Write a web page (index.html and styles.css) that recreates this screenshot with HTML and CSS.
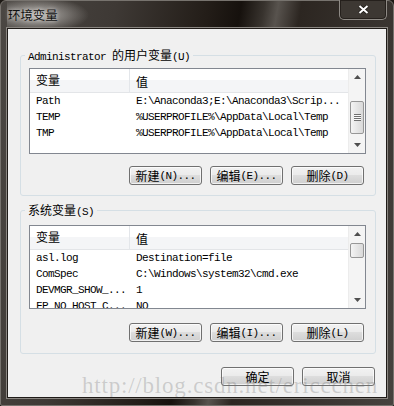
FILE: index.html
```
<!DOCTYPE html>
<html lang="zh-CN">
<head>
<meta charset="utf-8">
<title>环境变量</title>
<link rel="stylesheet" href="styles.css">
</head>
<body>
<div class="win">
  <div class="titlebar">
    <span class="title zh">环境变量</span>
    <div class="close">
      <svg width="11" height="9" viewBox="0 0 11 9"><path d="M1.5 1L9.5 8M9.5 1L1.5 8" stroke="#1a1612" stroke-width="3.4"/><path d="M1.5 1L9.5 8M9.5 1L1.5 8" stroke="#fff" stroke-width="2"/></svg>
    </div>
  </div>

  <div class="client">
    <!-- 用户变量 -->
    <fieldset class="group group-user">
      <legend><span>Administrator </span><span class="zh">的用户变量</span><span>(U)</span></legend>
      <div class="list list-user">
        <div class="grid">
          <div class="head"><span class="c1 zh">变量</span><span class="c2 zh">值</span></div>
          <div class="row"><span class="c1">Path</span><span class="c2">E:\Anaconda3;E:\Anaconda3\Scrip...</span></div>
          <div class="row"><span class="c1">TEMP</span><span class="c2">%USERPROFILE%\AppData\Local\Temp</span></div>
          <div class="row"><span class="c1">TMP</span><span class="c2">%USERPROFILE%\AppData\Local\Temp</span></div>
        </div>
        <div class="scroll">
          <div class="arrow up"><svg width="7" height="4" viewBox="0 0 7 4"><path d="M0 4L3.5 0L7 4Z" fill="#4f4f4f"/></svg></div>
          <div class="track"><div class="thumb" style="margin-top:15px;height:33px"></div></div>
          <div class="arrow"><svg width="7" height="4" viewBox="0 0 7 4"><path d="M0 0L3.5 4L7 0Z" fill="#4f4f4f"/></svg></div>
        </div>
      </div>
      <div class="btns">
        <button class="btn"><span class="zh">新建</span>(N)...</button>
        <button class="btn"><span class="zh">编辑</span>(E)...</button>
        <button class="btn"><span class="zh">删除</span>(D)</button>
      </div>
    </fieldset>

    <!-- 系统变量 -->
    <fieldset class="group group-sys">
      <legend><span class="zh">系统变量</span><span>(S)</span></legend>
      <div class="list list-sys">
        <div class="grid">
          <div class="head"><span class="c1 zh">变量</span><span class="c2 zh">值</span></div>
          <div class="row"><span class="c1">asl.log</span><span class="c2">Destination=file</span></div>
          <div class="row"><span class="c1">ComSpec</span><span class="c2">C:\Windows\system32\cmd.exe</span></div>
          <div class="row"><span class="c1">DEVMGR_SHOW_...</span><span class="c2">1</span></div>
          <div class="row"><span class="c1">FP_NO_HOST_C...</span><span class="c2">NO</span></div>
        </div>
        <div class="scroll">
          <div class="arrow up"><svg width="7" height="4" viewBox="0 0 7 4"><path d="M0 4L3.5 0L7 4Z" fill="#4f4f4f"/></svg></div>
          <div class="track"><div class="thumb" style="margin-top:0;height:15px"></div></div>
          <div class="arrow"><svg width="7" height="4" viewBox="0 0 7 4"><path d="M0 0L3.5 4L7 0Z" fill="#4f4f4f"/></svg></div>
        </div>
      </div>
      <div class="btns">
        <button class="btn"><span class="zh">新建</span>(W)...</button>
        <button class="btn"><span class="zh">编辑</span>(I)...</button>
        <button class="btn"><span class="zh">删除</span>(L)</button>
      </div>
    </fieldset>

    <div class="footer">
      <button class="btn"><span class="zh">确定</span></button>
      <button class="btn"><span class="zh">取消</span></button>
    </div>

    <div class="watermark">http://blog.csdn.net/ericcchen</div>
  </div>
</div>
</body>
</html>
```

FILE: styles.css
```
/* ── base ───────────────────────────── */
*,*::before,*::after{box-sizing:border-box}
body{margin:0;background:#1d1915;color:#000;
     font:11px/14px "Liberation Mono","Noto Sans CJK SC",monospace;
     letter-spacing:-.6px}
.zh{font-family:"Noto Sans CJK SC",sans-serif;font-size:12px;letter-spacing:0}

/* ── window frame ───────────────────── */
.win{width:394px;height:406px;display:flex;flex-direction:column;
     padding:0 6px 7px 6px;border:1px solid #77736e;border-radius:6px 6px 2px 2px;
     background:linear-gradient(100deg,#4b4743 0%,#3e3935 25%,#231d18 45%,#16110d 52%,
                #38332e 57%,#58534e 60%,#2c2621 65%,#3a3531 85%,#46423e 100%)}
.titlebar{height:27px;display:flex;justify-content:space-between;align-items:flex-start;
          background:radial-gradient(ellipse 52px 18px at 30px 14px,rgba(225,222,218,.75),rgba(225,222,218,0) 100%)}
.title{margin:6px 0 0 1px;line-height:16px;font-size:12.4px;color:#101010;
       text-shadow:0 0 4px rgba(255,255,255,.8)}
.close{width:48px;height:20px;margin-top:-1px;display:flex;align-items:center;justify-content:center;
       border:1px solid #8e8a85;border-top:none;border-radius:0 0 5px 5px;
       background:#3d3833;box-shadow:inset 0 0 0 1px #25201c}

.client{position:relative;flex:1;overflow:hidden;background:#f0f0f0;
        border:1px solid #1f1b18;box-shadow:0 0 0 1px #8a8681;
        padding:19px 10px 0 12px}

/* ── group box ──────────────────────── */
.group{margin:0;width:356px;border:1px solid #d5dfe5;border-radius:3px;
       padding:6px 9px 10px 8px}
.group legend{margin-left:-4px;padding:0 3px;line-height:14px;height:14px;white-space:nowrap}
.group-sys{margin-top:7px;padding-top:8px;padding-bottom:11px}

/* ── list view ──────────────────────── */
.list{display:flex;height:86px;background:#fff;border:1px solid #828790}
.list-sys{height:84px}
.grid{flex:1;overflow:hidden}
.head{display:flex;height:24px;align-items:center;padding-top:2px;
      background:linear-gradient(#fff 50%,#f4f5f7 50%);border-bottom:1px solid #e3e5e8}
.head .c1{height:24px;margin-top:-2px;padding-top:4px;border-right:1px solid #e3e6ea}
.row{display:flex;height:16px;align-items:center;white-space:nowrap}
.c1{width:100px;flex:none;padding-left:6px;overflow:hidden}
.c2{padding-left:6px}

.scroll{width:17px;display:flex;flex-direction:column;background:#f4f4f4;border-left:1px solid #ececec}
.arrow{height:17px;display:flex;align-items:center;justify-content:center}
.arrow.up svg{margin-top:-1px}
.track{flex:1}
.thumb{margin:0 1px;display:flex;align-items:center;justify-content:center;
       border:1px solid #979797;border-radius:2px;
       background:linear-gradient(90deg,#f4f4f4,#e6e6e6 50%,#d9d9d9)}
.list-user .thumb::after{content:"";width:7px;height:7px;
       background:repeating-linear-gradient(#707070 0 1px,#fafafa 1px 2px)}

/* ── buttons ────────────────────────── */
.btns{display:flex;justify-content:flex-end;gap:8px;margin-top:12px;padding-right:2px}
.group-sys .btns{margin-top:14px}
.btn{width:73px;height:19px;padding:0;display:flex;align-items:center;justify-content:center;
     font:inherit;letter-spacing:inherit;color:#000;white-space:nowrap;
     border:1px solid #707070;border-radius:3px;
     background:linear-gradient(#f2f2f2,#ebebeb 45%,#dddddd 50%,#cfcfcf);
     box-shadow:inset 0 0 0 1px rgba(255,255,255,.7)}

.footer{display:flex;justify-content:flex-end;gap:8px;margin-top:13px;padding-right:1px}

/* ── watermark ──────────────────────── */
.watermark{position:absolute;left:74px;top:344px;white-space:nowrap;
           font:23px/25px "Liberation Serif",serif;letter-spacing:.8px;
           color:rgba(110,110,110,.28)}
```
